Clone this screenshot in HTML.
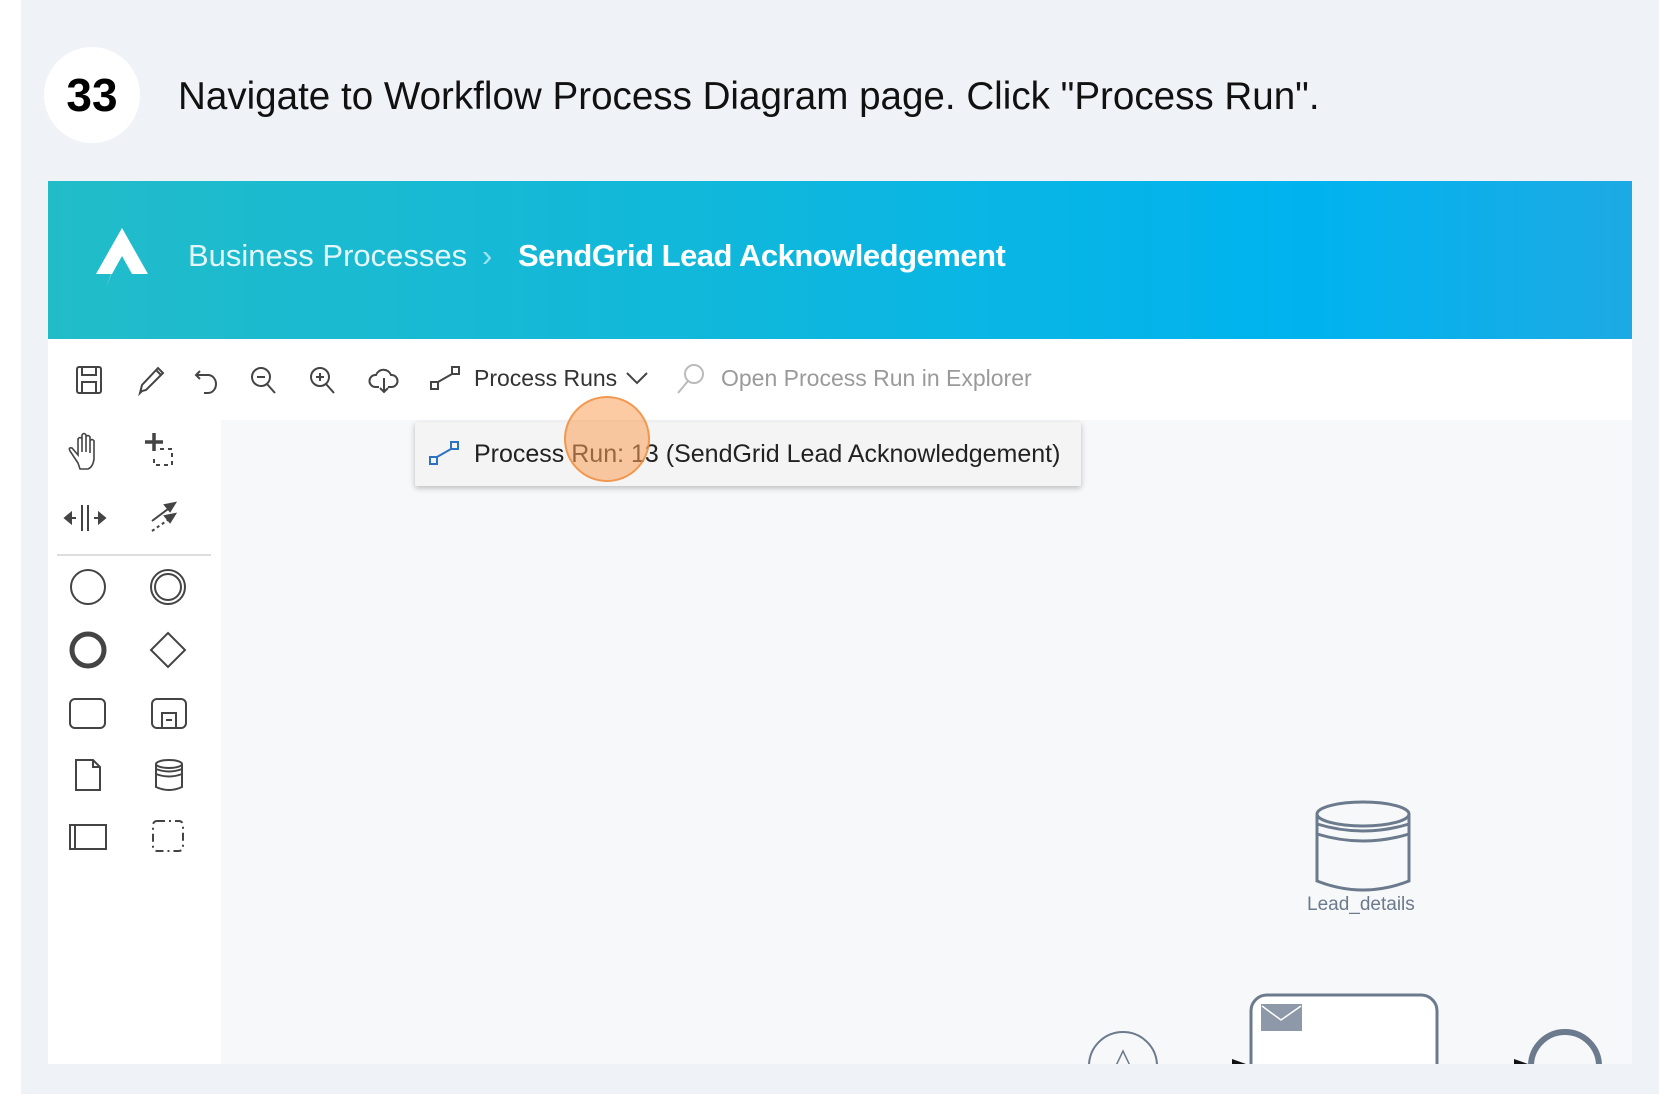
<!DOCTYPE html>
<html><head><meta charset="utf-8"><style>
*{margin:0;padding:0;box-sizing:border-box}
body{width:1680px;height:1116px;background:#fff;position:relative;overflow:hidden;font-family:"Liberation Sans",sans-serif}
.card{position:absolute;left:21px;top:0;width:1638px;height:1094px;background:#eff2f7}
.badge{position:absolute;left:44px;top:47px;width:96px;height:96px;border-radius:50%;background:#fff;text-align:center;line-height:96px;font-weight:bold;font-size:46px;color:#000}
.title{position:absolute;left:178px;top:75px;font-size:38.6px;color:#111;white-space:nowrap}
.shot{position:absolute;left:48px;top:181px;width:1584px;height:883px;overflow:hidden;background:#f7f8fa}
.hdr{position:absolute;left:0;top:0;width:1584px;height:158px;background:linear-gradient(90deg,#22bcc9 0%,#0fb7dc 45%,#00b3ef 80%,#1daae4 100%)}
.hdr .t{position:absolute;top:57px;font-size:31px;white-space:nowrap}
.tb{position:absolute;left:0;top:158px;width:1584px;height:81px;background:#fff}
.pal{position:absolute;left:0;top:239px;width:173px;height:644px;background:#fff}
.dd{position:absolute;left:367px;top:241px;width:666px;height:64px;background:#f4f4f4;box-shadow:0 2px 6px rgba(0,0,0,.25);border-radius:2px}
.dd span{position:absolute;left:59px;top:18px;font-size:25px;color:#222;white-space:nowrap}
.ring{position:absolute;left:516px;top:215px;width:86px;height:86px;border-radius:50%;background:rgba(250,160,90,.55);border:2px solid rgba(240,140,60,.8)}
svg{position:absolute;overflow:visible}
</style></head><body>
<div class="card"></div>
<div class="badge">33</div>
<div class="title">Navigate to Workflow Process Diagram page. Click "Process Run".</div>
<div class="shot">
 <div class="hdr">
  <svg style="left:44px;top:45px" width="60" height="64" viewBox="0 0 60 64"><path d="M30 2 L56 48 L40 48 L30 30 L20 48 L4 48 Z" fill="#fff"/><path d="M16 40 L22 40 L14 62 L24 36 L18 36 Z" fill="#fff"/></svg>
  <div class="t" style="left:140px;color:rgba(255,255,255,.88)">Business Processes</div>
  <div class="t" style="left:434px;color:rgba(255,255,255,.6)">›</div>
  <div class="t" style="left:470px;color:#fff;font-weight:bold;letter-spacing:-0.5px">SendGrid Lead Acknowledgement</div>
 </div>
 <div class="tb">
  <svg style="left:28px;top:26px" width="330" height="30" fill="none" stroke="#444" stroke-width="2">
   <rect x="1" y="2" width="24" height="26" rx="2"/><rect x="6" y="2" width="14" height="8"/><rect x="6" y="17" width="14" height="11"/>
   <path d="M66 26 L64 28 L66 20 L82 3 L87 8 L70 25 Z M80 5 L85 10"/>
   <path d="M124 6 L120 10 L124 14 M120 10 H132 A8 9 0 0 1 132 28 H128"/>
   <circle cx="185" cy="12" r="9"/><path d="M191 19 L199 28 M181 12 H189"/>
   <circle cx="244" cy="12" r="9"/><path d="M250 19 L258 28 M240 12 H248 M244 8 V16"/>
   <path d="M303 22 H299 A6 6 0 0 1 300 10 A8 8 0 0 1 315 10 A6 6 0 0 1 316 22 H312 M308 13 V27 M304 23 L308 27 L312 23"/>
  </svg>
  <svg style="left:382px;top:26px" width="32" height="28" fill="none" stroke="#444" stroke-width="2"><rect x="1" y="17" width="7" height="7"/><rect x="22" y="2" width="7" height="7"/><path d="M8 17 L22 9"/></svg>
  <div style="position:absolute;left:426px;top:26px;font-size:23px;color:#333">Process Runs</div>
  <svg style="left:578px;top:32px" width="22" height="14" fill="none" stroke="#444" stroke-width="2"><path d="M1 2 L11 12 L21 2"/></svg>
  <svg style="left:628px;top:24px" width="30" height="32" fill="none" stroke="#bbb" stroke-width="2"><circle cx="18" cy="11" r="9"/><path d="M12 18 L2 30"/></svg>
  <div style="position:absolute;left:673px;top:26px;font-size:23px;color:#9a9a9a">Open Process Run in Explorer</div>
 </div>
 <div class="pal">
  <svg style="left:0;top:-13px" width="173" height="200" fill="none" stroke="#444" stroke-width="2">
   <path d="M30 56 L22 44 Q20 40 24 41 L30 48 V32 Q32 29 34 32 V45 V28 Q36 25 38 28 V45 V30 Q40 27 42 30 V46 V34 Q44 31 46 34 V52 Q45 60 40 62 H32 Z" stroke-width="1.6"/>
   <path d="M106 26 V44 M97 35 H115" stroke-width="3.5"/><path d="M112 42 H124 V58 H106 V48" stroke-dasharray="4 4"/>
   <path d="M34 98 V124 M40 98 V124 M18 111 H28 M46 111 H56"/><path d="M17 111 L23 106 V116 Z M57 111 L51 106 V116 Z" fill="#444"/>
   <path d="M104 114 L124 99"/><path d="M104 124 L124 110" stroke-dasharray="3 3"/><path d="M127 96 L117 98 L122 104 Z M127 107 L117 109 L122 115 Z" fill="#444"/>
  </svg>
  <svg style="left:0;top:-181px" width="173" height="640" fill="none" stroke="#444" stroke-width="2">
   <path d="M9 316 H163" stroke="#ddd" stroke-width="2"/>
   <circle cx="40" cy="348" r="17"/><circle cx="120" cy="348" r="17"/><circle cx="120" cy="348" r="13"/>
   <circle cx="40" cy="411" r="16" stroke-width="5"/><path d="M120 394 L137 411 L120 428 L103 411 Z"/>
   <rect x="22" y="460" width="35" height="29" rx="5"/><rect x="104" y="460" width="34" height="29" rx="5"/><rect x="114" y="474" width="14" height="15"/><path d="M118 481 H124"/>
   <path d="M28 521 H45 L52 528 V551 H28 Z M45 521 V528 H52"/>
   <ellipse cx="121" cy="525" rx="13" ry="4"/><path d="M108 525 V548 Q121 554 134 548 V525 M108 530 Q121 535 134 530 M108 535 Q121 540 134 535"/>
   <rect x="22" y="586" width="36" height="24"/><path d="M27 586 V610"/>
   <rect x="105" y="582" width="30" height="30" rx="4" stroke-dasharray="8 4 2 4"/>
  </svg>
 </div>
 <svg style="left:0;top:0" width="1584" height="883" fill="none" stroke="#6b7a8c" stroke-width="3">
  <ellipse cx="1315" cy="633" rx="46" ry="12"/><path d="M1269 633 V700 Q1315 718 1361 700 V633 M1269 643 Q1315 657 1361 643 M1269 653 Q1315 667 1361 653"/>
  <rect x="1203" y="814" width="186" height="120" rx="16" fill="#fff"/>
  <rect x="1213" y="823" width="41" height="27" fill="#8d98a8" stroke="none"/><path d="M1214 825 L1233 839 L1253 825" stroke="#fff" stroke-width="1.5"/>
  <circle cx="1075" cy="885" r="34" stroke-width="2"/><path d="M1065 891 L1075 870 L1085 891" stroke-width="1.5"/>
  <circle cx="1517" cy="885" r="34" stroke-width="6"/>
  <path d="M1184 878 L1198 883 L1184 888 Z M1466 878 L1480 883 L1466 888 Z" fill="#111" stroke="none"/>
 </svg>
 <div style="position:absolute;left:1259px;top:713px;font-size:19px;color:#6b7a8c">Lead_details</div>
 <div class="dd">
  <svg style="left:14px;top:18px" width="32" height="28" fill="none" stroke="#2e72c4" stroke-width="2"><rect x="1" y="17" width="7" height="7"/><rect x="22" y="2" width="7" height="7"/><path d="M8 17 L22 9"/></svg>
  <span>Process Run: 13 (SendGrid Lead Acknowledgement)</span>
 </div>
 <div class="ring"></div>
</div>
</body></html>
